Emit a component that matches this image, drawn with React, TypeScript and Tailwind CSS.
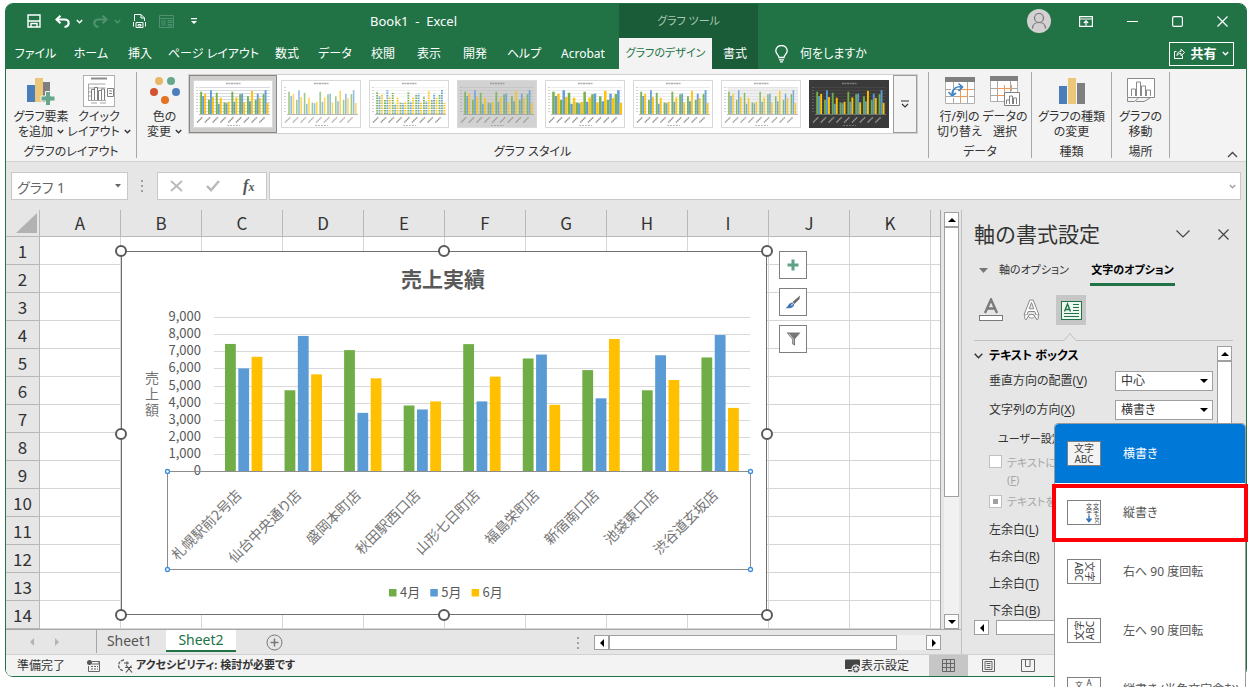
import { useState } from "react";
import type { ReactNode } from "react";

const STORES = [
  { name: "札幌駅前2号店", values: [7430, 6000, 6680] },
  { name: "仙台中央通り店", values: [4720, 7900, 5650] },
  { name: "盛岡本町店", values: [7070, 3400, 5420] },
  { name: "秋田駅西口店", values: [3830, 3600, 4070] },
  { name: "山形七日町店", values: [7420, 4070, 5520] },
  { name: "福島栄町店", values: [6580, 6810, 3870] },
  { name: "新宿南口店", values: [5900, 4250, 7720] },
  { name: "池袋東口店", values: [4720, 6770, 5320] },
  { name: "渋谷道玄坂店", values: [6640, 7950, 3690] },
];
const SERIES = [
  { name: "4月", color: "#70ad47" },
  { name: "5月", color: "#5b9bd5" },
  { name: "6月", color: "#ffc000" },
];
const COLUMNS = ["A", "B", "C", "D", "E", "F", "G", "H", "I", "J", "K"];
const TABS = ["ファイル", "ホーム", "挿入", "ページ レイアウト", "数式", "データ", "校閲", "表示", "開発", "ヘルプ", "Acrobat"];

function Caret({ className = "" }: { className?: string }) {
  return (
    <svg width="7" height="5" viewBox="0 0 7 5" className={className} aria-hidden="true">
      <path d="M0.8 1l2.7 2.7L6.2 1" fill="none" stroke="currentColor" strokeWidth="1.4" />
    </svg>
  );
}

function Triangle({ dir }: { dir: "up" | "down" | "left" | "right" }) {
  const d = {
    up: "M0 6l4-4 4 4z",
    down: "M0 2h8l-4 4z",
    left: "M6 0v8L2 4z",
    right: "M2 0v8l4-4z",
  }[dir];
  return (
    <svg width="8" height="8" viewBox="0 0 8 8" aria-hidden="true">
      <path d={d} fill="currentColor" />
    </svg>
  );
}

function ScrollButton({ dir, label }: { dir: "up" | "down" | "left" | "right"; label: string }) {
  return (
    <button
      aria-label={label}
      className="flex size-[15px] shrink-0 items-center justify-center border border-[#a0a0a0] bg-white text-black"
    >
      <Triangle dir={dir} />
    </button>
  );
}

function TitleBar() {
  return (
    <div className="flex h-[34px] items-center pl-[21px]">
      <button aria-label="上書き保存">
        <svg width="14" height="14" viewBox="0 0 14 14" fill="none" stroke="#fff" strokeWidth="1.4">
          <path d="M1 1h12v12H1zM1 7h12" />
          <path d="M4 13V9.500h6V13" />
        </svg>
      </button>
      <button aria-label="元に戻す" className="ml-[14px] flex items-center gap-[6px]">
        <svg width="15" height="13" viewBox="0 0 15 13" fill="none" stroke="#fff" strokeWidth="2.2">
          <path d="M5.5 0.8L1.5 4.5l4 3.7" />
          <path d="M2 4.5h7.5c5.5 0 5.5 7 0 7.500" />
        </svg>
        <Caret />
      </button>
      <button aria-label="やり直し" className="ml-[10px] flex items-center gap-[6px] text-[#4f9270]">
        <svg width="15" height="13" viewBox="0 0 15 13" fill="none" stroke="currentColor" strokeWidth="2.2">
          <path d="M9.5 0.8l4 3.7-4 3.7" />
          <path d="M13 4.5H5.5c-5.5 0-5.5 7 0 7.500" />
        </svg>
        <Caret />
      </button>
      <button aria-label="印刷プレビュー" className="ml-[12px]">
        <svg width="13" height="16" viewBox="0 0 13 16" fill="none" stroke="#fff">
          <path d="M1.5 8V1.5h6.5L11.5 5v3M8 1.5V5h3.5" />
          <path d="M0.5 9v4.5M12.5 9v4.5M3 9.500h7v5H3zM5 11.500h3v1.500H5z" />
        </svg>
      </button>
      <button aria-label="フォーム" className="ml-[13px]">
        <svg width="15" height="13" viewBox="0 0 15 13" fill="none" stroke="#4f9270">
          <path d="M0.5 0.5h14v12H0.5zM0.5 3.5h14M2 6h5M2 8h5M2 10h5M9 5.5h4v2H9zM9 9.5h4v1.5H9z" />
        </svg>
      </button>
      <button aria-label="クイック アクセス ツール バーのユーザー設定" className="ml-[17px]">
        <svg width="6" height="7" viewBox="0 0 6 7" fill="#fff">
          <path d="M0 0h6v1.3H0zM0 3h6L3 6z" />
        </svg>
      </button>
      <h1 className="ml-auto mr-[162px] whitespace-pre text-[13px] leading-4">Book1  -  Excel</h1>
    </div>
  );
}

function Header() {
  return (
    <header className="flex h-[65px] rounded-t-md bg-[#217346] text-xs text-white">
      <div className="w-[613px] shrink-0">
        <TitleBar />
        <nav className="grid h-[31px] grid-cols-[59px_52px_46px_101px_46px_50px_46px_46px_46px_52px_66px]">
          {TABS.map((tab) => (
            <button key={tab} className="whitespace-nowrap text-center leading-4">
              {tab}
            </button>
          ))}
        </nav>
      </div>
      <div className="w-[139px] shrink-0 bg-[#1b5c38]">
        <div className="flex h-[34px] items-center justify-center text-[11px] text-[#a9c9b6]">グラフ ツール</div>
        <div className="flex h-[31px]">
          <button className="w-[93px] whitespace-nowrap bg-[#f3f3f3] text-[11px] text-[#217346]">グラフのデザイン</button>
          <button className="flex-1">書式</button>
        </div>
      </div>
      <div className="flex min-w-0 flex-1 flex-col">
        <div className="flex h-[34px] items-center justify-end pr-[18px]">
          <button aria-label="アカウント" className="mr-[28px]">
            <svg width="24" height="24" viewBox="0 0 24 24" fill="none" stroke="#7a7478" strokeWidth="1.2">
              <circle cx="12" cy="12" r="12" fill="#d2d0d1" stroke="none" />
              <circle cx="12" cy="9" r="4.5" />
              <path d="M5.5 19.5c0-8 13-8 13 0" />
            </svg>
          </button>
          <button aria-label="リボンの表示オプション" className="mr-[34px]">
            <svg width="14" height="11" viewBox="0 0 14 11" fill="none" stroke="#fff" strokeWidth="1.2">
              <path d="M0.6 0.6h12.800v9.800H0.600zM0.6 3h12.800M7 9.500V5M4.800 7L7 4.800 9.200 7" />
            </svg>
          </button>
          <button aria-label="最小化" className="mr-[34px]">
            <svg width="11" height="11" viewBox="0 0 11 11" stroke="#fff"><path d="M0 5.5h11" /></svg>
          </button>
          <button aria-label="最大化" className="mr-[34px]">
            <svg width="11" height="11" viewBox="0 0 11 11" fill="none" stroke="#fff" strokeWidth="1.2">
              <rect x="0.6" y="0.6" width="9.8" height="9.8" rx="1.5" />
            </svg>
          </button>
          <button aria-label="閉じる">
            <svg width="11" height="11" viewBox="0 0 11 11" stroke="#fff" strokeWidth="1.2">
              <path d="M0.5 0.5l10 10M10.5 0.5l-10 10" />
            </svg>
          </button>
        </div>
        <div className="flex h-[31px] items-center justify-between pl-[17px] pr-[12px]">
          <button className="flex items-center gap-[12px]">
            <svg width="13" height="18" viewBox="0 0 13 18" fill="none" stroke="#fff" strokeWidth="1.3">
              <path d="M4 12.5c0-2.5-3.2-3.5-3.2-6.7a5.6 5.2 0 0 1 11.4 0c0 3.2-3.2 4.2-3.2 6.7zM4 14.8h5M5 16.8h3" />
            </svg>
            何をしますか
          </button>
          <button className="flex h-6 w-[65px] items-center justify-center gap-[5px] border border-white text-[13px] font-bold">
            <svg width="11" height="11" viewBox="0 0 11 11" fill="none" stroke="#fff">
              <path d="M2.5 3.5h-2v7h8v-3M3 7.5c0-3 2-4 4-4V1l3.5 3.500L7 7.8V5.5c-2 0-3 .5-4 2z" />
            </svg>
            共有
            <Caret />
          </button>
        </div>
      </div>
    </header>
  );
}

type ThumbStyle = {
  bg: string;
  panel?: string;
  grid?: string;
  bar: number;
  gap: number;
  opacity: number;
  stripes?: boolean;
};

const THUMBS: ThumbStyle[] = [
  { bg: "#ffffff", grid: "#c3ccd4", bar: 1.9, gap: 2, opacity: 0.95 },
  { bg: "#ffffff", bar: 1.6, gap: 2.2, opacity: 0.65 },
  { bg: "#ffffff", grid: "#ececec", bar: 1.9, gap: 2.4, opacity: 0.9, stripes: true },
  { bg: "#d2d2d2", grid: "#c2c2c2", bar: 1.8, gap: 2.1, opacity: 0.75 },
  { bg: "#ffffff", grid: "#e4e4e4", bar: 2.5, gap: 2.5, opacity: 0.95 },
  { bg: "#ffffff", grid: "#e4e4e4", bar: 1.9, gap: 2, opacity: 0.9 },
  { bg: "#ffffff", panel: "#efefef", grid: "#dddddd", bar: 1.5, gap: 2, opacity: 0.8 },
  { bg: "#3a3a3a", grid: "#4c4c4c", bar: 1.9, gap: 2, opacity: 1 },
];

function StyleThumb({ style }: { style: ThumbStyle }) {
  const dark = style.bg === "#3a3a3a";
  const ink = dark ? "#9a9a9a" : "#8a8a8a";
  return (
    <svg width="80" height="48" viewBox="0 0 80 48" aria-hidden="true">
      <rect x="0.5" y="0.5" width="79" height="47" fill={style.bg} stroke={dark ? "#3a3a3a" : "#d9d9d9"} />
      <path d="M33 3.5h15" stroke={ink} strokeWidth="1.5" strokeDasharray="2 0.5" opacity="0.7" />
      {style.panel && <rect x="7" y="7" width="70" height="27" fill={style.panel} />}
      {style.grid &&
        [7, 10, 13, 16, 19, 22, 25, 28, 31].map((y) => (
          <path key={y} d={`M6 ${y + 0.5}h71`} stroke={style.grid} strokeWidth="0.7" />
        ))}
      <path d="M4 7v27" stroke={ink} strokeWidth="1.5" strokeDasharray="1 2" opacity="0.5" />
      {STORES.map((store, i) => (
        <g key={store.name} opacity={style.opacity}>
          {store.values.map((v, s) => {
            const h = v * 0.003;
            return (
              <rect
                key={s}
                x={7.2 + i * 7.8 + s * style.gap}
                y={34 - h}
                width={style.bar}
                height={h}
                fill={SERIES[s].color}
              />
            );
          })}
          <path
            d={`M${4 + i * 7.8} 42.500l5.500-5.500`}
            stroke={ink}
            strokeWidth="1.5"
            strokeDasharray="1.5 0.4"
          />
        </g>
      ))}
      {style.stripes &&
        [12, 14.5, 17, 19.5, 22, 24.5, 27, 29.5, 32].map((y) => (
          <path key={y} d={`M6 ${y}h71`} stroke="#fff" strokeWidth="0.9" />
        ))}
      <path d="M6 34.5h71" stroke={ink} strokeWidth="0.6" />
      <path d="M34 45.5h13" stroke={ink} strokeDasharray="2 1" opacity="0.6" />
    </svg>
  );
}

function RibbonGroup({ label, className = "", children }: { label: string; className?: string; children: ReactNode }) {
  return (
    <section className={`my-[3px] flex flex-col justify-between border-r border-[#a8a8a8] ${className}`}>
      <div className="flex">{children}</div>
      <div className="text-center leading-3">{label}</div>
    </section>
  );
}

function RibbonButton({
  icon,
  lines,
  menu = false,
  className = "",
}: {
  icon: ReactNode;
  lines: [string, string];
  menu?: boolean;
  className?: string;
}) {
  return (
    <button className={`flex shrink-0 flex-col items-center whitespace-nowrap leading-[15px] ${className}`}>
      <span className="flex h-[37px] items-center">{icon}</span>
      <span>{lines[0]}</span>
      <span className="flex items-center gap-1">
        {lines[1]}
        {menu && <Caret />}
      </span>
    </button>
  );
}

function AddElementIcon() {
  return (
    <svg width="30" height="30" viewBox="0 0 30 30">
      <path d="M1 9h8v17H1z" fill="#4a7ebb" />
      <path d="M9 2h8v24H9z" fill="#ecc679" />
      <path d="M17 6h7v20h-7z" fill="#7f7f7f" />
      <path d="M19.5 15.5h5V20H29v5h-4.5v4.500h-5V25H15v-5h4.500z" fill="#65a78c" stroke="#f3f3f3" />
    </svg>
  );
}

function QuickLayoutIcon() {
  return (
    <svg width="32" height="32" viewBox="0 0 32 32" fill="none" stroke="#7f7f7f">
      <rect x="0.5" y="0.5" width="31" height="31" fill="#fff" stroke="#b0b0b0" />
      <path d="M8 3.5h16" stroke="#8c8c8c" strokeWidth="2" />
      <path d="M5.5 9v16.5H23M5.5 9h17M5.5 13h17M5.5 17h17M5.5 21h17" strokeWidth="0.7" />
      <path d="M8.5 25V14.5h3V25M11.5 25V12.5h3V25M15.5 25V15.5h3V25M18.5 25V14h3v11" fill="#fff" />
      <path d="M24.5 13.5h6v8h-6zM26 16h3M26 18.5h3" fill="#fff" />
      <path d="M8 28h6M17 28h6" strokeWidth="0.7" />
    </svg>
  );
}

function ColorsIcon() {
  return (
    <svg width="30" height="30" viewBox="0 0 30 30">
      <circle cx="9" cy="5" r="4" fill="#e9b667" />
      <circle cx="21" cy="5" r="4" fill="#65a78c" />
      <circle cx="4" cy="16" r="4" fill="#d35230" />
      <circle cx="26" cy="16" r="4" fill="#4a7ebb" />
      <circle cx="15" cy="24" r="4" fill="#e37222" />
    </svg>
  );
}

function SwitchRowColIcon() {
  return (
    <svg width="30" height="28" viewBox="0 0 30 28" fill="none">
      <path d="M0.5 0.5h29v26H0.5z" fill="#fff" stroke="#b0b0b0" />
      <path d="M0 0h30v5H0z" fill="#7f7f7f" />
      <path d="M0 12.5h30M0 19.5h30M8.5 5v21M22.5 5v21" stroke="#a8a8a8" strokeDasharray="6 2" />
      <path d="M14 12.500h13M12 19.500h11M15.500 9v17M22.500 9v12" stroke="#ed9a5b" />
      <path d="M7 18c0-6 4-9 10-8" stroke="#3f83c4" strokeWidth="1.600" />
      <path d="M13.5 6.5l4 3.500-4 4M3.500 15l3.500 4 4-3" stroke="#3f83c4" strokeWidth="1.600" />
    </svg>
  );
}

function SelectDataIcon() {
  return (
    <svg width="30" height="30" viewBox="0 0 30 30" fill="none">
      <path d="M0.5 0.5h27v25H0.5z" fill="#fff" stroke="#b0b0b0" />
      <path d="M0 0h28v5H0z" fill="#7f7f7f" />
      <path d="M0 12.5h28M0 19.5h14M7.5 5v21M20.5 5v11" stroke="#a8a8a8" />
      <path d="M7 12.5h14M7 19.5h8M14.5 9v11M21.5 9v6" stroke="#ed9a5b" />
      <path d="M14.5 16.5h15v13h-15z" fill="#fff" stroke="#7f7f7f" />
      <path d="M16.5 28v-4h3v4M19.500 28v-8h3v8M23.500 28v-6h3v6" stroke="#7f7f7f" />
    </svg>
  );
}

function ChartTypeIcon() {
  return (
    <svg width="26" height="28" viewBox="0 0 26 28">
      <path d="M0 9h8v18H0z" fill="#4a7ebb" />
      <path d="M9 1h8v26H9z" fill="#ecc679" />
      <path d="M18 6h8v21h-8z" fill="#7f7f7f" />
    </svg>
  );
}

function MoveChartIcon() {
  return (
    <svg width="28" height="26" viewBox="0 0 28 26" fill="none" stroke="#8a8a8a">
      <path d="M0.5 0.5h27v19H0.5z" fill="#fff" />
      <path d="M4.5 18V11h4v7M9.5 18V4h4v14M14.5 18V8h4v10M19.5 18v-6h4v6" />
      <path d="M0.5 20v3.5h7l4-3.500M9 23.500h8l6-3.500" />
    </svg>
  );
}

function Ribbon() {
  const [selected, setSelected] = useState(0);
  return (
    <div className="flex h-[93px] border-b border-[#d2d2d2] bg-[#f3f3f3] text-xs text-[#333]">
      <RibbonGroup label="グラフのレイアウト" className="w-[131px] shrink-0">
        <RibbonButton className="w-[70px]" icon={<AddElementIcon />} lines={["グラフ要素", "を追加"]} menu />
        <RibbonButton className="w-[46px]" icon={<QuickLayoutIcon />} lines={["クイック", "レイアウト"]} menu />
      </RibbonGroup>
      <RibbonGroup label="グラフ スタイル" className="min-w-0 flex-1">
        <RibbonButton className="w-[51px] pl-1" icon={<ColorsIcon />} lines={["色の", "変更"]} menu />
        <div className="mt-[2px] flex h-[60px] border border-[#d0d0d0] bg-white">
          {THUMBS.map((style, i) => (
            <button
              key={i}
              aria-label={`スタイル ${i + 1}`}
              onClick={() => setSelected(i)}
              className={
                i === selected
                  ? "flex w-[88px] items-center justify-center bg-[#cfcdcb] outline-1 -outline-offset-1 outline-[#8a8886]"
                  : "flex w-[88px] items-center justify-center"
              }
            >
              <StyleThumb style={style} />
            </button>
          ))}
          <button
            aria-label="その他のスタイル"
            className="flex w-[24px] items-center justify-center border border-[#9d9d9d] bg-[#f3f3f3]"
          >
            <svg width="8" height="8" viewBox="0 0 8 8" fill="none" stroke="#333" strokeWidth="1.2">
              <path d="M0 1h8M1 4l3 3 3-3" />
            </svg>
          </button>
        </div>
      </RibbonGroup>
      <RibbonGroup label="データ" className="w-[103px] shrink-0">
        <RibbonButton className="ml-[8px] w-[45px]" icon={<SwitchRowColIcon />} lines={["行/列の", "切り替え"]} />
        <RibbonButton className="w-[46px]" icon={<SelectDataIcon />} lines={["データの", "選択"]} />
      </RibbonGroup>
      <RibbonGroup label="種類" className="w-[80px] shrink-0">
        <RibbonButton className="w-full" icon={<ChartTypeIcon />} lines={["グラフの種類", "の変更"]} />
      </RibbonGroup>
      <RibbonGroup label="場所" className="w-[58px] shrink-0">
        <RibbonButton className="w-full" icon={<MoveChartIcon />} lines={["グラフの", "移動"]} />
      </RibbonGroup>
      <div className="flex w-[76px] items-end justify-end pb-[3px] pr-[8px]">
        <button aria-label="リボンを折りたたむ">
          <svg width="11" height="7" viewBox="0 0 11 7" fill="none" stroke="#444" strokeWidth="1.3">
            <path d="M1 6l4.5-4.5L10 6" />
          </svg>
        </button>
      </div>
    </div>
  );
}

function Dots() {
  return (
    <svg width="3" height="12" viewBox="0 0 3 12" fill="#a0a0a0" aria-hidden="true">
      <path d="M0 0h2v2H0zM0 5h2v2H0zM0 10h2v2H0z" />
    </svg>
  );
}

function FormulaBar() {
  return (
    <div className="flex h-[48px] items-start bg-[#e6e6e6] px-[5px] pt-[10px]">
      <div className="flex h-[28px] w-[117px] items-center border border-[#c8c8c8] bg-white pr-[6px] text-[#666]">
        <input
          aria-label="名前ボックス"
          defaultValue="グラフ 1"
          className="w-full min-w-0 bg-transparent pl-[5px] pt-[3px] text-sm leading-5 outline-none"
        />
        <button aria-label="名前の一覧" className="shrink-0">
          <svg width="6" height="4" viewBox="0 0 6 4"><path d="M0 0h6L3 3.5z" fill="#666" /></svg>
        </button>
      </div>
      <div className="flex h-[28px] w-[29px] items-center justify-center">
        <Dots />
      </div>
      <div className="flex h-[28px] w-[110px] items-center justify-around border border-[#c8c8c8] bg-white">
        <button aria-label="キャンセル">
          <svg width="13" height="12" viewBox="0 0 13 12" stroke="#b8b8b8" strokeWidth="1.8">
            <path d="M1 1l11 10M12 1L1 11" />
          </svg>
        </button>
        <button aria-label="入力">
          <svg width="14" height="12" viewBox="0 0 14 12" fill="none" stroke="#b8b8b8" strokeWidth="2.4">
            <path d="M1 6l4 4.2L13 1" />
          </svg>
        </button>
        <button aria-label="関数の挿入" className="font-['Liberation_Serif',serif] text-base font-bold italic leading-4 text-[#555]">
          f<span className="text-xs">x</span>
        </button>
      </div>
      <div className="ml-[2px] flex h-[28px] flex-1 items-center border border-[#c8c8c8] bg-white pr-[4px] text-[#a0a0a0]">
        <input aria-label="数式バー" className="min-w-0 flex-1 bg-transparent px-2 text-sm outline-none" />
        <Caret />
      </div>
    </div>
  );
}

function Handle({ x, y }: { x: number; y: number }) {
  return <circle cx={x} cy={y} r="5" fill="#fff" stroke="#595959" strokeWidth="2" />;
}

function SalesChart() {
  const left = 93;
  const right = 629;
  const base = 220;
  const unit = 17.1 / 1000;
  const step = (right - left) / STORES.length;
  return (
    <svg
      width="646"
      height="364"
      viewBox="0 0 646 364"
      role="img"
      aria-label="売上実績"
      className="overflow-visible font-['Noto_Sans_CJK_JP',sans-serif]"
    >
      <rect x="0.5" y="0.5" width="645" height="363" fill="#fff" stroke="#6f6f6f" />
      <text x="322" y="36" textAnchor="middle" fontSize="21" fontWeight="700" fill="#595959">売上実績</text>
      {["売", "上", "額"].map((c, i) => (
        <text key={c} x="31" y={132 + i * 16} textAnchor="middle" fontSize="14" fill="#757575">{c}</text>
      ))}
      {Array.from({ length: 10 }, (_, i) => {
        const y = base - i * 1000 * unit;
        return (
          <g key={i}>
            {i > 0 && <path d={`M${left} ${Math.round(y) + 0.5}H${right}`} stroke="#d9d9d9" />}
            <text x="80" y={y + 4} textAnchor="end" fontSize="13" fill="#595959">
              {(i * 1000).toLocaleString("en-US")}
            </text>
          </g>
        );
      })}
      {STORES.map((store, i) => {
        const x = left + i * step;
        const tx = x + 28.5;
        return (
          <g key={store.name}>
            {store.values.map((v, s) => (
              <rect key={s} x={x + 11 + s * 13.3} y={base - v * unit} width="10.8" height={v * unit} fill={SERIES[s].color} />
            ))}
            <text x={tx} y="245" textAnchor="end" fontSize="14" fill="#757575" transform={`rotate(-45 ${tx} 245)`}>
              {store.name}
            </text>
          </g>
        );
      })}
      <rect x="46.5" y="220.5" width="583" height="98" fill="none" stroke="#8c8c8c" />
      {[[46.5, 220.5], [629.5, 220.5], [46.5, 318.5], [629.5, 318.5]].map(([x, y]) => (
        <circle key={`${x}-${y}`} cx={x} cy={y} r="2" fill="#fff" stroke="#3a8dde" strokeWidth="1.3" />
      ))}
      {SERIES.map((s, i) => (
        <g key={s.name}>
          <rect x={268 + i * 41.3} y="338" width="7.5" height="7.5" fill={s.color} />
          <text x={279 + i * 41.3} y="346" fontSize="13" fill="#595959">{s.name}</text>
        </g>
      ))}
      <Handle x={0} y={0} />
      <Handle x={323} y={0} />
      <Handle x={646} y={0} />
      <Handle x={0} y={183} />
      <Handle x={646} y={183} />
      <Handle x={0} y={364} />
      <Handle x={323} y={364} />
      <Handle x={646} y={364} />
    </svg>
  );
}

function ChartButtons() {
  const cls = "flex size-7 items-center justify-center border border-[#7f7f7f] bg-white";
  return (
    <>
      <button aria-label="グラフ要素" className={cls}>
        <svg width="12" height="12" viewBox="0 0 12 12"><path d="M4.5 0.5h3v4h4v3h-4v4h-3v-4h-4v-3h4z" fill="#5fa285" /></svg>
      </button>
      <button aria-label="グラフ スタイル" className={cls}>
        <svg width="16" height="14" viewBox="0 0 16 14">
          <path d="M15 0.5L14.5 4 9.5 9 7.5 7z" fill="#6b6b6b" />
          <path d="M7 7.5l2.3 2.2C8.5 13 4 13.5 0.5 13.3 3.5 11.5 3 8.500 7 7.500z" fill="#3f73b5" />
          <path d="M6.5 8.5l1.500 1.500-1.500 1z" fill="#fff" />
        </svg>
      </button>
      <button aria-label="グラフ フィルター" className={cls}>
        <svg width="15" height="14" viewBox="0 0 15 14">
          <path d="M0.5 0.5h14L9 7v6.500L6 12V7z" fill="#767676" />
          <path d="M3 1.8l4.2 5v5" stroke="#d0d0d0" fill="none" />
        </svg>
      </button>
    </>
  );
}

function Grid() {
  return (
    <div className="relative min-w-0 flex-1 overflow-hidden border-r border-[#a6a6a6] bg-white">
      <table className="w-full table-fixed border-separate border-spacing-0 font-['Noto_Sans_CJK_JP',sans-serif] text-[17px] leading-[22px] text-[#333]">
        <thead>
          <tr className="h-[27px] bg-[#e6e6e6]">
            <th className="w-[34px] border-b border-r border-[#b8b8b8] p-0 align-bottom">
              <svg width="21" height="20" viewBox="0 0 21 20" className="mb-[3px] ml-auto mr-[2px]" aria-hidden="true">
                <path d="M21 0v20H0z" fill="#b2b2b2" />
              </svg>
            </th>
            {COLUMNS.map((c) => (
              <th key={c} scope="col" className="w-[81px] border-b border-r border-[#b8b8b8] p-0 text-center font-normal">
                {c}
              </th>
            ))}
            <th className="border-b border-[#b8b8b8] p-0" />
          </tr>
        </thead>
        <tbody>
          {Array.from({ length: 14 }, (_, r) => (
            <tr key={r} className="h-[28px]">
              <th scope="row" className="border-b border-r border-[#b8b8b8] bg-[#e6e6e6] p-0 text-center font-normal">
                {r + 1}
              </th>
              {COLUMNS.map((c) => (
                <td key={c} className="border-b border-r border-[#d6d6d6] p-0" />
              ))}
              <td className="border-b border-[#d6d6d6] p-0" />
            </tr>
          ))}
        </tbody>
      </table>
      {/* floating chart object */}
      <div className="absolute left-[115px] top-[41px]">
        <SalesChart />
      </div>
      <div className="absolute left-[773px] top-[41px] flex flex-col gap-[9px]">
        <ChartButtons />
      </div>
    </div>
  );
}

function SheetTabs() {
  return (
    <div className="flex h-[25px] items-start border-t border-[#a6a6a6] bg-[#e6e6e6] pr-[20px] text-sm text-[#555]">
      <div className="flex h-[23px] w-[91px] items-center gap-[17px] border-r border-[#a6a6a6] pl-[22px] text-[#b4b4b4]">
        <button aria-label="前のシート"><Triangle dir="left" /></button>
        <button aria-label="次のシート"><Triangle dir="right" /></button>
      </div>
      <button className="h-[22px] w-[69px] pr-1 leading-5">Sheet1</button>
      <button className="h-[22px] w-[70px] border-b-2 border-[#217346] bg-white leading-5 text-[#217346]">Sheet2</button>
      <button aria-label="新しいシート" className="ml-[30px] mt-[4px]">
        <svg width="17" height="17" viewBox="0 0 17 17" fill="none" stroke="#777">
          <circle cx="8.5" cy="8.5" r="7.5" />
          <path d="M8.5 4.5v8M4.5 8.5h8" strokeWidth="1.5" />
        </svg>
      </button>
      <div className="ml-auto mt-[5px] flex items-center gap-[14px]">
        <Dots />
        <div className="flex w-[347px] bg-[#f1f1f1]">
          <ScrollButton dir="left" label="左へスクロール" />
          <div className="h-[15px] w-[288px] border border-[#a0a0a0] bg-white" />
          <div className="flex-1" />
          <ScrollButton dir="right" label="右へスクロール" />
        </div>
      </div>
    </div>
  );
}

function PaneLabel({ text, shortcut }: { text: string; shortcut: string }) {
  return (
    <>
      {text}(<u className="underline-offset-2">{shortcut}</u>)
    </>
  );
}

function PaneSelect({ id, options }: { id: string; options: string[] }) {
  return (
    <span className="relative w-[98px] shrink-0">
      <select
        id={id}
        className="block h-[20px] w-full appearance-none border border-[#a0a0a0] bg-white pl-[5px] text-xs leading-[18px] text-[#333]"
      >
        {options.map((o) => (
          <option key={o}>{o}</option>
        ))}
      </select>
      <span className="pointer-events-none absolute right-[5px] top-[6px] text-black">
        <Triangle dir="down" />
      </span>
    </span>
  );
}

function DirectionIcon({ kind }: { kind: string }) {
  return (
    <svg width="34" height="25" viewBox="0 0 34 25" aria-hidden="true" className="shrink-0">
      <rect x="0.5" y="0.5" width="33" height="24" fill={kind === "h" ? "#f3f3f3" : "#fff"} stroke="#7f7f7f" />
      <g fill="#444" fontSize="10" textAnchor="middle">
        {kind === "h" && (
          <>
            <text x="17" y="11">文字</text>
            <text x="17" y="22">ABC</text>
          </>
        )}
        {kind === "r" && (
          <g transform="rotate(90 17 12.5)">
            <text x="17" y="11">文字</text>
            <text x="17" y="22">ABC</text>
          </g>
        )}
        {kind === "l" && (
          <g transform="rotate(-90 17 12.5)">
            <text x="17" y="11">文字</text>
            <text x="17" y="22">ABC</text>
          </g>
        )}
        {kind === "v" && (
          <>
            <g fontSize="6">
              <text x="22" y="8">文</text>
              <text x="22" y="14">字</text>
              <text x="29" y="8">文</text>
              <text x="29" y="14">字</text>
            </g>
            <text fontSize="5" x="0" y="0" transform="translate(27.5 19) rotate(90)">ABC</text>
            <path d="M22 15.5v5M19.5 18.5l2.5 3 2.5-3" fill="none" stroke="#2f6fb5" strokeWidth="1.5" />
          </>
        )}
        {kind === "s" && (
          <>
            <text x="12" y="11" fontSize="8">文</text>
            <text x="12" y="20" fontSize="8">字</text>
            <text x="22" y="9" fontSize="8">A</text>
            <text x="22" y="17" fontSize="8">B</text>
          </>
        )}
      </g>
    </svg>
  );
}

const DIRECTIONS = [
  { kind: "h", label: "横書き" },
  { kind: "v", label: "縦書き" },
  { kind: "r", label: "右へ 90 度回転" },
  { kind: "l", label: "左へ 90 度回転" },
  { kind: "s", label: "縦書き (半角文字含む)" },
];

function DirectionMenu() {
  return (
    <ul role="listbox" aria-label="文字列の方向" className="absolute left-[92px] right-0 top-[213px] z-20 rounded-t border border-[#9a9a9a] bg-white text-xs text-[#555]">
      {DIRECTIONS.map((d, i) => (
        <li
          key={d.kind}
          role="option"
          aria-selected={i === 0}
          className={
            i === 0
              ? "flex h-[59px] items-center gap-[22px] rounded-t bg-[#0078d7] pl-[12px] text-white"
              : "relative flex h-[59px] items-center gap-[22px] whitespace-nowrap pl-[12px]"
          }
        >
          <DirectionIcon kind={d.kind} />
          {d.label}
          {i === 1 && <span className="absolute -inset-x-[3px] bottom-0 top-px border-4 border-[#fb0007]" />}
        </li>
      ))}
    </ul>
  );
}

function FormatPane() {
  return (
    <aside className="relative w-[285px] shrink-0 border-l border-[#c0c0c0] bg-[#e6e6e6] pl-[12px] text-xs text-[#333]">
      <div className="flex h-[48px] items-center pr-[17px]">
        <h2 className="text-[21px] leading-7 [font-feature-settings:normal]">軸の書式設定</h2>
        <button aria-label="作業ウィンドウのオプション" className="ml-auto mr-[28px]">
          <svg width="14" height="8" viewBox="0 0 14 8" fill="none" stroke="#444" strokeWidth="1.2"><path d="M0.5 0.5L7 7l6.5-6.5" /></svg>
        </button>
        <button aria-label="閉じる">
          <svg width="11" height="11" viewBox="0 0 11 11" stroke="#444" strokeWidth="1.2"><path d="M0.5 0.5l10 10M10.5 0.5l-10 10" /></svg>
        </button>
      </div>
      <div className="flex h-[28px] items-start whitespace-nowrap text-[11px] leading-6">
        <button className="flex w-[116px] items-center gap-[11px] pl-[5px]">
          <svg width="9" height="5" viewBox="0 0 9 5"><path d="M0 0h9L4.5 5z" fill="#777" /></svg>
          軸のオプション
        </button>
        <button className="h-[28px] w-[85px] border-b-3 border-[#217346] pb-px font-bold text-black">文字のオプション</button>
      </div>
      <div className="mt-[9px] flex h-[30px] items-center">
        <button aria-label="文字の塗りつぶしと輪郭" className="ml-[5px] mr-[19px]">
          <svg width="25" height="24" viewBox="0 0 25 24" fill="none">
            <path d="M6 15L12 1.5 18 15M8.5 10.5h7" stroke="#7a7a7a" strokeWidth="2.4" />
            <rect x="0.5" y="17.5" width="23" height="5" fill="#fff" stroke="#7a7a7a" />
          </svg>
        </button>
        <button aria-label="文字の効果" className="mr-[16px]">
          <svg width="17" height="22" viewBox="0 0 17 22" fill="#fff" stroke="#8a8a8a">
            <path d="M1 16L6.8 1h3.4L16 16h-3l-1.2-3.5H5.2L4 16zM6.2 9.8h4.6L8.5 3.5z" />
            <path d="M2 16c-1 3 0 4 1 5l3-5M15 16c1 3 0 4-1 5l-3-5M5.5 17.5c1 2 5 2 6 0l-1-2h-4z" />
          </svg>
        </button>
        <button aria-label="テキスト ボックス" className="flex size-[30px] items-center justify-center bg-[#c6c6c6]">
          <svg width="21" height="19" viewBox="0 0 21 19" fill="none" stroke="#217346">
            <rect x="0.5" y="0.5" width="20" height="18" fill="#edf7f0" />
            <path d="M3.5 10.5L6.5 3l3 7.5M4.5 8.5h4" strokeWidth="1.4" />
            <path d="M12 3.5h6M12 6.5h6M12 9.5h6M3 12.5h15M3 15.5h15" />
          </svg>
        </button>
      </div>
      <svg width="259" height="9" viewBox="0 0 259 9" fill="none" stroke="#c0c0c0" className="mt-[7px]" aria-hidden="true">
        <path d="M0 8.5h90l6-7 6 7h157" />
      </svg>
      <div className="flex">
        <div className="w-[239px]">
          <h3 className="mt-[5px] leading-5">
            <button className="flex items-center gap-[6px] font-bold text-black">
              <svg width="9" height="6" viewBox="0 0 9 6" fill="none" stroke="#333" strokeWidth="1.4"><path d="M0.7 0.8l3.800 3.900L8.300 0.800" /></svg>
              テキスト ボックス
            </button>
          </h3>
          <div className="flex flex-col gap-[9px] pl-[15px] pt-[5px] leading-5">
            <div className="flex items-center justify-between whitespace-nowrap">
              <label htmlFor="valign"><PaneLabel text="垂直方向の配置" shortcut="V" /></label>
              <PaneSelect id="valign" options={["中心", "上", "下"]} />
            </div>
            <div className="flex items-center justify-between whitespace-nowrap">
              <label htmlFor="tdir"><PaneLabel text="文字列の方向" shortcut="X" /></label>
              <PaneSelect id="tdir" options={["横書き", "縦書き"]} />
            </div>
          </div>
          <div className="flex flex-col pl-[15px] leading-[17px]">
            <div className="mt-[10px] pl-[9px] text-[11px]">ユーザー設定</div>
            <label className="mt-[7px] flex items-start gap-[5px] text-[#a6a6a6]">
              <input type="checkbox" disabled className="mt-px size-[13px] appearance-none border border-[#c0c0c0] bg-white" />
              <span className="text-[11px]">
                テキストに
                <br />
                (<u>F</u>)
              </span>
            </label>
            <label className="mt-[5px] flex items-center gap-[5px] text-[11px] text-[#a6a6a6]">
              <input
                type="checkbox"
                disabled
                className="size-[13px] appearance-none border border-[#c0c0c0] bg-[#a0a0a0] shadow-[inset_0_0_0_3px_#fff]"
              />
              テキストを
            </label>
            <div className="mt-[11px] flex flex-col gap-[10px]">
              <span><PaneLabel text="左余白" shortcut="L" /></span>
              <span><PaneLabel text="右余白" shortcut="R" /></span>
              <span><PaneLabel text="上余白" shortcut="T" /></span>
              <span><PaneLabel text="下余白" shortcut="B" /></span>
            </div>
          </div>
        </div>
        <div className="ml-[4px] mt-[5px] flex w-[15px] flex-col bg-[#f1f1f1]">
          <ScrollButton dir="up" label="上へスクロール" />
          <div className="h-[120px] border border-[#a0a0a0] bg-white" />
        </div>
      </div>
      <div className="mt-px flex gap-[7px]">
        <ScrollButton dir="left" label="左へスクロール" />
        <div className="h-[15px] w-[180px] border border-[#a0a0a0] bg-white" />
      </div>
      <DirectionMenu />
    </aside>
  );
}

function StatusBar() {
  return (
    <footer className="flex h-[22px] items-center rounded-b-md border-t border-[#d0d0d0] bg-[#f3f3f3] pl-[11px] text-xs text-[#333]">
      <span className="w-[70px]">準備完了</span>
      <button aria-label="マクロの記録">
        <svg width="13" height="12" viewBox="0 0 13 12" fill="none" stroke="#666">
          <path d="M5 1.5h7.5v10h-11V6M12 1v3H5" />
          <path d="M4 6.5h7M4 9h7" strokeDasharray="2 1" />
          <circle cx="2.5" cy="2.5" r="2.5" fill="#555" stroke="none" />
        </svg>
      </button>
      <button className="ml-[18px] flex items-center gap-[3px] text-[11px] font-bold">
        <svg width="15" height="14" viewBox="0 0 15 14" fill="none" stroke="#555" strokeWidth="1.2">
          <path d="M6 0.8C-1 2-1 10.5 5 11.5" strokeDasharray="3 1.2" />
          <path d="M6 4h5M9 2.5v3M8 6l6 7.500M13.500 6.500L8 13.500M7 8.500h7" />
        </svg>
        アクセシビリティ: 検討が必要です
      </button>
      <button className="ml-auto flex items-center gap-px">
        <svg width="15" height="14" viewBox="0 0 15 14" fill="none">
          <path d="M0 1.5a1 1 0 0 1 1-1h13a1 1 0 0 1 1 1V10H0zM3 11h5v1.500H3z" fill="#444" />
          <circle cx="11" cy="10" r="4.5" fill="#f3f3f3" />
          <circle cx="11" cy="10" r="2.6" stroke="#444" strokeWidth="1.8" strokeDasharray="1.6 0.6" />
        </svg>
        表示設定
      </button>
      <div className="ml-[20px] flex h-full w-[317px]">
        <button aria-label="標準" className="flex w-[39px] items-center justify-center bg-[#c6c6c6]">
          <svg width="13" height="13" viewBox="0 0 13 13" fill="none" stroke="#666"><path d="M0.5 0.5h12v12H0.5zM0.5 4.5h12M0.5 8.5h12M4.5 0.5v12M8.5 0.5v12" /></svg>
        </button>
        <button aria-label="ページ レイアウト" className="flex w-[40px] items-center justify-center">
          <svg width="13" height="13" viewBox="0 0 13 13" fill="none" stroke="#666"><path d="M0.5 0.5h12v12H0.5zM3 2.5h7v8H3zM4.5 4.5h4M4.5 6.500h4M4.5 8.500h4" /></svg>
        </button>
        <button aria-label="改ページ プレビュー" className="flex w-[40px] items-center justify-center">
          <svg width="14" height="13" viewBox="0 0 14 13" fill="none" stroke="#666"><path d="M0.5 0.5h13v12H0.5zM4.5 0.5v7h4.5v-7" /></svg>
        </button>
      </div>
    </footer>
  );
}

export default function App() {
  return (
    <div className="relative min-h-screen overflow-hidden bg-white pl-[5px] pr-[7px] pt-[3px] font-['Noto_Sans','Noto_Sans_CJK_JP',sans-serif] [font-feature-settings:'palt']">
      <div className="rounded-lg border border-[#217346]">
        <Header />
        <Ribbon />
        <FormulaBar />
        <div className="flex">
          <main className="flex min-w-0 flex-1 flex-col bg-[#e6e6e6]">
            <div className="flex">
              <Grid />
              <div className="flex w-[20px] shrink-0 flex-col pl-[3px] pr-[2px] pt-[2px]">
                <ScrollButton dir="up" label="上へスクロール" />
                <div className="h-[270px] border border-[#a0a0a0] bg-white" />
                <div className="flex-1 bg-[#f1f1f1]" />
                <ScrollButton dir="down" label="下へスクロール" />
              </div>
            </div>
            <SheetTabs />
          </main>
          <FormatPane />
        </div>
        <StatusBar />
      </div>
    </div>
  );
}
